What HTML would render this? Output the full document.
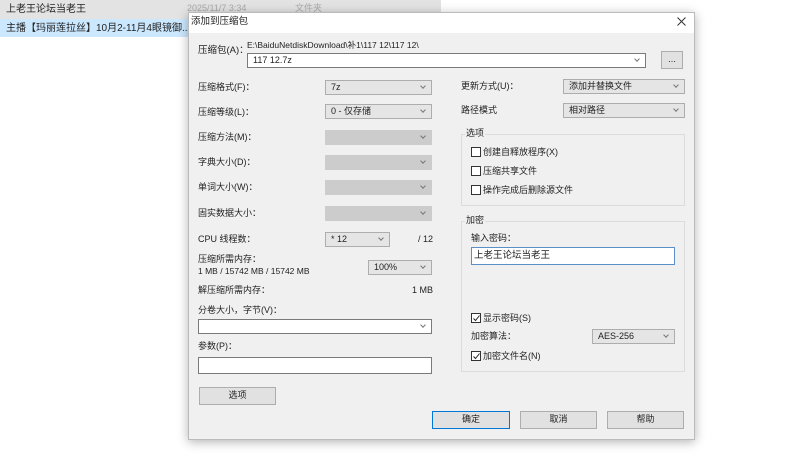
<!DOCTYPE html>
<html><head><meta charset="utf-8"><style>
body{margin:0;width:800px;height:473px;background:#fff;position:relative;overflow:hidden;font-family:"Liberation Sans","Noto Sans CJK SC",sans-serif;font-size:9px;color:#222}
div,span{position:absolute;box-sizing:border-box}
.t{white-space:nowrap;line-height:11px}
.cb{background:#e5e5e5;border:1px solid #adadad}
.cb.dis{background:#cccccc;border-color:#cccccc}
.cb:after{content:"";position:absolute;right:6px;top:3px;width:3px;height:3px;border-right:1px solid #777;border-bottom:1px solid #777;transform:rotate(45deg)}
.cb span{left:5px;top:1px;line-height:11px}
.in{background:#fff;border:1px solid #7a7a7a}
.btn{background:#e1e1e1;border:1px solid #adadad;text-align:center;line-height:15px}
.chk{width:10px;height:10px;border:1px solid #333;background:#fff}
.grp{border:1px solid #dcdcdc}
</style></head><body>
<div style="left:0;top:0;width:441px;height:19px;background:#e3e3e3"></div>
<div class="t" style="left:6px;top:4px;font-size:10px">上老王论坛当老王</div>
<div class="t" style="left:187px;top:3px;color:#aaa">2025/11/7 3:34</div>
<div class="t" style="left:295px;top:3px;color:#aaa">文件夹</div>
<div style="left:0;top:19px;width:192px;height:18px;background:#cce8ff"></div>
<div class="t" style="left:6px;top:23px;font-size:10px">主播【玛丽莲拉丝】10月2-11月4眼镜御...</div>

<div style="left:188px;top:12px;width:507px;height:428px;background:#f0f0f0;box-shadow:0 2px 10px rgba(0,0,0,.3);border:1px solid #bbb">
<div style="left:0;top:0;width:505px;height:20px;background:#fff"></div>
</div>
<div class="t" style="left:191px;top:16px;font-size:9.5px">添加到压缩包</div>
<svg style="position:absolute;left:677px;top:17px" width="9" height="9"><path d="M0.5 0.5L8.5 8.5M8.5 0.5L0.5 8.5" stroke="#333" stroke-width="1"/></svg>

<div class="t" style="left:198px;top:45px;font-size:9.5px">压缩包(A)：</div>
<div class="t" style="left:247px;top:40px;font-size:8.5px">E:\BaiduNetdiskDownload\补1\117 12\117 12\</div>
<div class="cb in" style="left:247px;top:53px;width:399px;height:15px;background:#fff"><span>117 12.7z</span></div>
<div class="btn" style="left:661px;top:51px;width:22px;height:18px;line-height:14px">...</div>

<div class="t" style="left:198px;top:82px">压缩格式(F)：</div>
<div class="cb" style="left:325px;top:80px;width:107px;height:15px"><span>7z</span></div>
<div class="t" style="left:198px;top:107px">压缩等级(L)：</div>
<div class="cb" style="left:325px;top:104px;width:107px;height:15px"><span>0 - 仅存储</span></div>
<div class="t" style="left:198px;top:132px">压缩方法(M)：</div>
<div class="cb dis" style="left:325px;top:130px;width:107px;height:15px"></div>
<div class="t" style="left:198px;top:157px">字典大小(D)：</div>
<div class="cb dis" style="left:325px;top:155px;width:107px;height:15px"></div>
<div class="t" style="left:198px;top:182px">单词大小(W)：</div>
<div class="cb dis" style="left:325px;top:180px;width:107px;height:15px"></div>
<div class="t" style="left:198px;top:208px">固实数据大小：</div>
<div class="cb dis" style="left:325px;top:206px;width:107px;height:15px"></div>
<div class="t" style="left:198px;top:234px">CPU 线程数：</div>
<div class="cb" style="left:325px;top:232px;width:65px;height:15px"><span>* 12</span></div>
<div class="t" style="left:418px;top:234px">/ 12</div>
<div class="t" style="left:198px;top:254px">压缩所需内存：</div>
<div class="t" style="left:198px;top:266px;font-size:8.5px">1 MB / 15742 MB / 15742 MB</div>
<div class="cb" style="left:368px;top:260px;width:64px;height:15px"><span>100%</span></div>
<div class="t" style="left:198px;top:285px">解压缩所需内存：</div>
<div class="t" style="left:412px;top:285px">1 MB</div>
<div class="t" style="left:198px;top:305px">分卷大小，字节(V)：</div>
<div class="cb in" style="left:198px;top:319px;width:234px;height:15px;background:#fff"></div>
<div class="t" style="left:198px;top:341px">参数(P)：</div>
<div class="in" style="left:198px;top:357px;width:234px;height:17px"></div>
<div class="btn" style="left:199px;top:387px;width:77px;height:18px">选项</div>

<div class="t" style="left:461px;top:81px">更新方式(U)：</div>
<div class="cb" style="left:563px;top:79px;width:122px;height:15px"><span>添加并替换文件</span></div>
<div class="t" style="left:461px;top:105px">路径模式</div>
<div class="cb" style="left:563px;top:103px;width:122px;height:15px"><span>相对路径</span></div>

<div class="grp" style="left:461px;top:134px;width:224px;height:72px"></div>
<div class="t" style="left:465px;top:128px;background:#f0f0f0;padding:0 1px">选项</div>
<div class="chk" style="left:471px;top:147px"></div><div class="t" style="left:483px;top:147px">创建自释放程序(X)</div>
<div class="chk" style="left:471px;top:166px"></div><div class="t" style="left:483px;top:166px">压缩共享文件</div>
<div class="chk" style="left:471px;top:185px"></div><div class="t" style="left:483px;top:185px">操作完成后删除源文件</div>

<div class="grp" style="left:461px;top:221px;width:224px;height:151px"></div>
<div class="t" style="left:465px;top:215px;background:#f0f0f0;padding:0 1px">加密</div>
<div class="t" style="left:471px;top:233px">输入密码：</div>
<div class="in" style="left:471px;top:247px;width:204px;height:18px;border-color:#5a8fc8"></div>
<div class="t" style="left:474px;top:250px;font-size:9.5px">上老王论坛当老王</div>
<div class="chk" style="left:471px;top:313px"></div>
<svg style="position:absolute;left:473px;top:315px" width="7" height="7"><path d="M0.5 3.5L2.5 5.5L6.5 0.5" stroke="#222" fill="none"/></svg>
<div class="t" style="left:483px;top:313px">显示密码(S)</div>
<div class="t" style="left:471px;top:331px">加密算法：</div>
<div class="cb" style="left:592px;top:329px;width:83px;height:15px"><span>AES-256</span></div>
<div class="chk" style="left:471px;top:351px"></div>
<svg style="position:absolute;left:473px;top:353px" width="7" height="7"><path d="M0.5 3.5L2.5 5.5L6.5 0.5" stroke="#222" fill="none"/></svg>
<div class="t" style="left:483px;top:351px">加密文件名(N)</div>

<div class="btn" style="left:432px;top:411px;width:78px;height:18px;border-color:#0078d7">确定</div>
<div class="btn" style="left:520px;top:411px;width:77px;height:18px">取消</div>
<div class="btn" style="left:607px;top:411px;width:77px;height:18px">帮助</div>
</body></html>
